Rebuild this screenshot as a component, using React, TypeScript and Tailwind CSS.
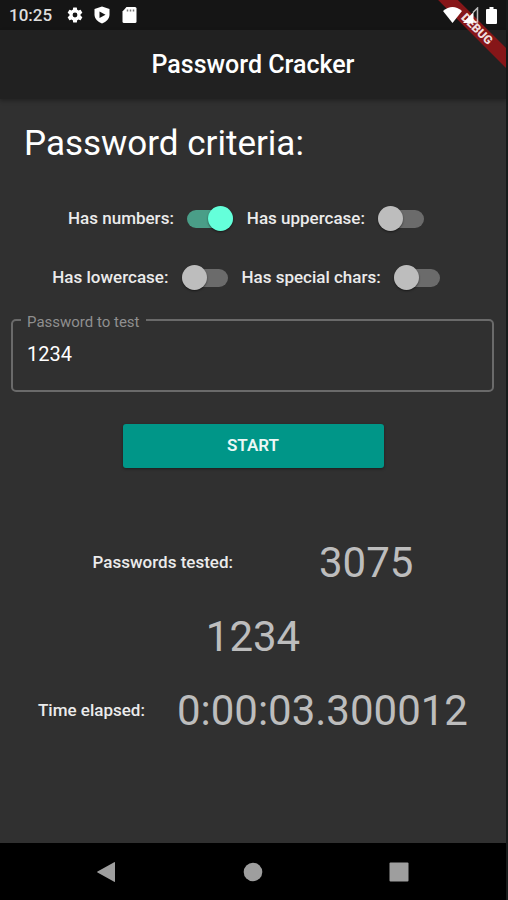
import { useState } from "react";

function StatusBar() {
  return (
    <div className="flex h-[30px] items-center bg-[#151515] pl-[9px] pr-[9px] text-white">
      <span className="w-[57px] text-[17px] font-medium leading-[30px] text-[#dedede]">10:25</span>
      <svg className="h-[18px] w-[18px]" viewBox="0 0 24 24" fill="currentColor" aria-hidden="true">
        <path d="M19.43 12.98a7.8 7.8 0 0 0 0-1.96l2.11-1.65a.5.5 0 0 0 .12-.64l-2-3.46a.5.5 0 0 0-.61-.22l-2.49 1a7.3 7.3 0 0 0-1.69-.98l-.38-2.65A.5.5 0 0 0 14 2h-4a.5.5 0 0 0-.49.42l-.38 2.65c-.61.25-1.17.59-1.69.98l-2.49-1a.5.5 0 0 0-.61.22l-2 3.46a.5.5 0 0 0 .12.64l2.11 1.65a7.8 7.8 0 0 0 0 1.96l-2.11 1.65a.5.5 0 0 0-.12.64l2 3.46c.12.22.39.3.61.22l2.49-1c.52.4 1.08.73 1.69.98l.38 2.65c.03.24.24.42.49.42h4c.25 0 .46-.18.49-.42l.38-2.65a7.3 7.3 0 0 0 1.69-.98l2.49 1c.23.09.49 0 .61-.22l2-3.46a.5.5 0 0 0-.12-.64zM12 15.2a3.2 3.2 0 1 1 0-6.4 3.2 3.2 0 0 1 0 6.4z" />
      </svg>
      <svg className="ml-[9px] h-[18px] w-[18px]" viewBox="0 0 18 18" aria-hidden="true">
        <path d="M9 0.5 16.5 3v5.5c0 4.200-3.200 7.500-7.500 9-4.300-1.500-7.500-4.800-7.500-9V3z" fill="currentColor" />
        <path d="M6.500 5.500v6.500l6-3.250z" fill="#151515" />
      </svg>
      <svg className="ml-[9px] h-[18px] w-[18px]" viewBox="0 0 18 18" aria-hidden="true">
        <path d="M6.500 1H15a1.500 1.500 0 0 1 1.500 1.500v13A1.500 1.500 0 0 1 15 17H4a1.500 1.500 0 0 1-1.500-1.500V5.500z" fill="currentColor" />
        <path d="M7.500 3.500v2M10.500 3.500v2M13.500 3.500v2" stroke="#777" strokeWidth="1.500" />
      </svg>
      <div className="relative z-20 ml-auto flex items-center">
        <svg className="h-4 w-[19px]" viewBox="0 0 19 16" fill="currentColor" aria-hidden="true">
          <path d="M0 4Q9.500-4 19 4L9.500 16z" />
        </svg>
        <svg className="ml-px h-4 w-4" viewBox="0 0 16 16" fill="currentColor" aria-hidden="true">
          <path d="M0 16 10.500 5v11z" />
          <path d="M10 5.500l4.500-4.500v14H10" fill="none" stroke="currentColor" strokeWidth="1.500" strokeOpacity="0.7" />
        </svg>
        <svg className="ml-[7px] h-[17px] w-[11px]" viewBox="0 0 11 17" fill="currentColor" aria-hidden="true">
          <path d="M3.500 0h4v2H10a1 1 0 0 1 1 1v13a1 1 0 0 1-1 1H1a1 1 0 0 1-1-1V3a1 1 0 0 1 1-1h2.500z" />
        </svg>
      </div>
    </div>
  );
}

function DebugBanner() {
  return (
    <div className="pointer-events-none absolute right-0 top-0 z-10 h-[70px] w-[70px] overflow-hidden">
      <div className="absolute -right-[27px] top-[22px] w-28 rotate-45 bg-[#861618] text-center text-xs font-black leading-[14px] text-[#f0dede]">
        DEBUG
      </div>
    </div>
  );
}

function Toggle({ label, initial = false }: { label: string; initial?: boolean }) {
  const [on, setOn] = useState(initial);
  return (
    <label className="flex cursor-pointer items-center">
      <span className="font-medium">{label}</span>
      <span className="flex w-[73px] justify-center">
        <input
          type="checkbox"
          role="switch"
          checked={on}
          onChange={(e) => setOn(e.target.checked)}
          className="flex h-[18px] w-[46px] cursor-pointer appearance-none items-center rounded-full bg-[#6b6b6b] before:h-[25px] before:w-[25px] before:shrink-0 before:rounded-full before:bg-[#bdbdbd] before:shadow-[0_1px_2px_rgba(0,0,0,0.5)] before:content-[''] checked:justify-end checked:bg-[#4a9e88] checked:before:bg-[#64ffda]"
        />
      </span>
    </label>
  );
}

export default function App() {
  const [password, setPassword] = useState("1234");
  return (
    <div className="flex min-h-screen bg-[#171b1b] pr-0.5 font-['Roboto',sans-serif] text-[17px] text-[#ebebeb]">
      <div className="relative flex min-w-0 flex-1 flex-col bg-[#303030]">
        <StatusBar />
        <header className="flex h-[69px] items-center justify-center bg-[#212121] shadow-[0_2px_4px_rgba(0,0,0,0.3)]">
          <h1 className="text-[25px] font-medium text-white">Password Cracker</h1>
        </header>

        <main className="flex flex-1 flex-col">
          <h2 className="px-6 pt-6 text-[35px] leading-[42px] text-white">Password criteria:</h2>

          <div className="mt-6 flex h-[59px] items-center justify-center">
            <Toggle label="Has numbers:" initial />
            <Toggle label="Has uppercase:" />
          </div>
          <div className="flex h-[59px] items-center justify-center">
            <Toggle label="Has lowercase:" />
            <Toggle label="Has special chars:" />
          </div>

          <fieldset className="ml-[11px] mr-3 mt-px h-[84px] rounded-[5px] border-2 border-[#6a6a6a] px-2">
            <legend className="px-1.5 pt-1 text-[15px] leading-5 text-[#8f8f8f]">
              <label htmlFor="password">Password to test</label>
            </legend>
            <input
              id="password"
              type="text"
              value={password}
              onChange={(e) => setPassword(e.target.value)}
              className="block h-11 w-full bg-transparent px-1.5 text-xl text-white outline-none"
            />
          </fieldset>

          <button
            type="button"
            className="mt-8 h-11 w-[261px] self-center rounded-[3px] bg-[#009688] font-semibold text-[#ecf8f6] shadow-[0_1px_3px_rgba(0,0,0,0.4)]"
          >
            START
          </button>

          <div className="mt-[70px] flex h-[50px] items-center justify-center gap-[86px]">
            <span className="font-medium">Passwords tested:</span>
            <output className="text-[42px] leading-[50px] text-[#bdbdbd]">3075</output>
          </div>
          <output className="mt-6 text-center text-[42px] leading-[50px] text-[#bdbdbd]">1234</output>
          <div className="mt-6 flex h-[50px] items-center justify-center gap-8">
            <span className="font-medium">Time elapsed:</span>
            <output className="text-[42px] leading-[50px] text-[#bdbdbd]">0:00:03.300012</output>
          </div>
        </main>

        <nav aria-label="System" className="flex h-[57px] items-center justify-center gap-[126px] bg-black text-[#9e9e9e]">
          <button type="button" aria-label="Back">
            <svg className="h-5 w-5" viewBox="0 0 20 20" fill="currentColor">
              <path d="M18 0.500v19a.5.5 0 0 1-.8.3L.5 10.500a.6.6 0 0 1 0-1L17.200.200a.5.5 0 0 1 .8.300z" />
            </svg>
          </button>
          <button type="button" aria-label="Home">
            <svg className="h-5 w-5" viewBox="0 0 20 20" fill="currentColor">
              <circle cx="10" cy="10" r="9.300" />
            </svg>
          </button>
          <button type="button" aria-label="Recent apps">
            <svg className="h-5 w-5" viewBox="0 0 20 20" fill="currentColor">
              <rect x="0.500" y="0.500" width="19" height="19" rx="1" />
            </svg>
          </button>
        </nav>
        <DebugBanner />
      </div>
    </div>
  );
}
